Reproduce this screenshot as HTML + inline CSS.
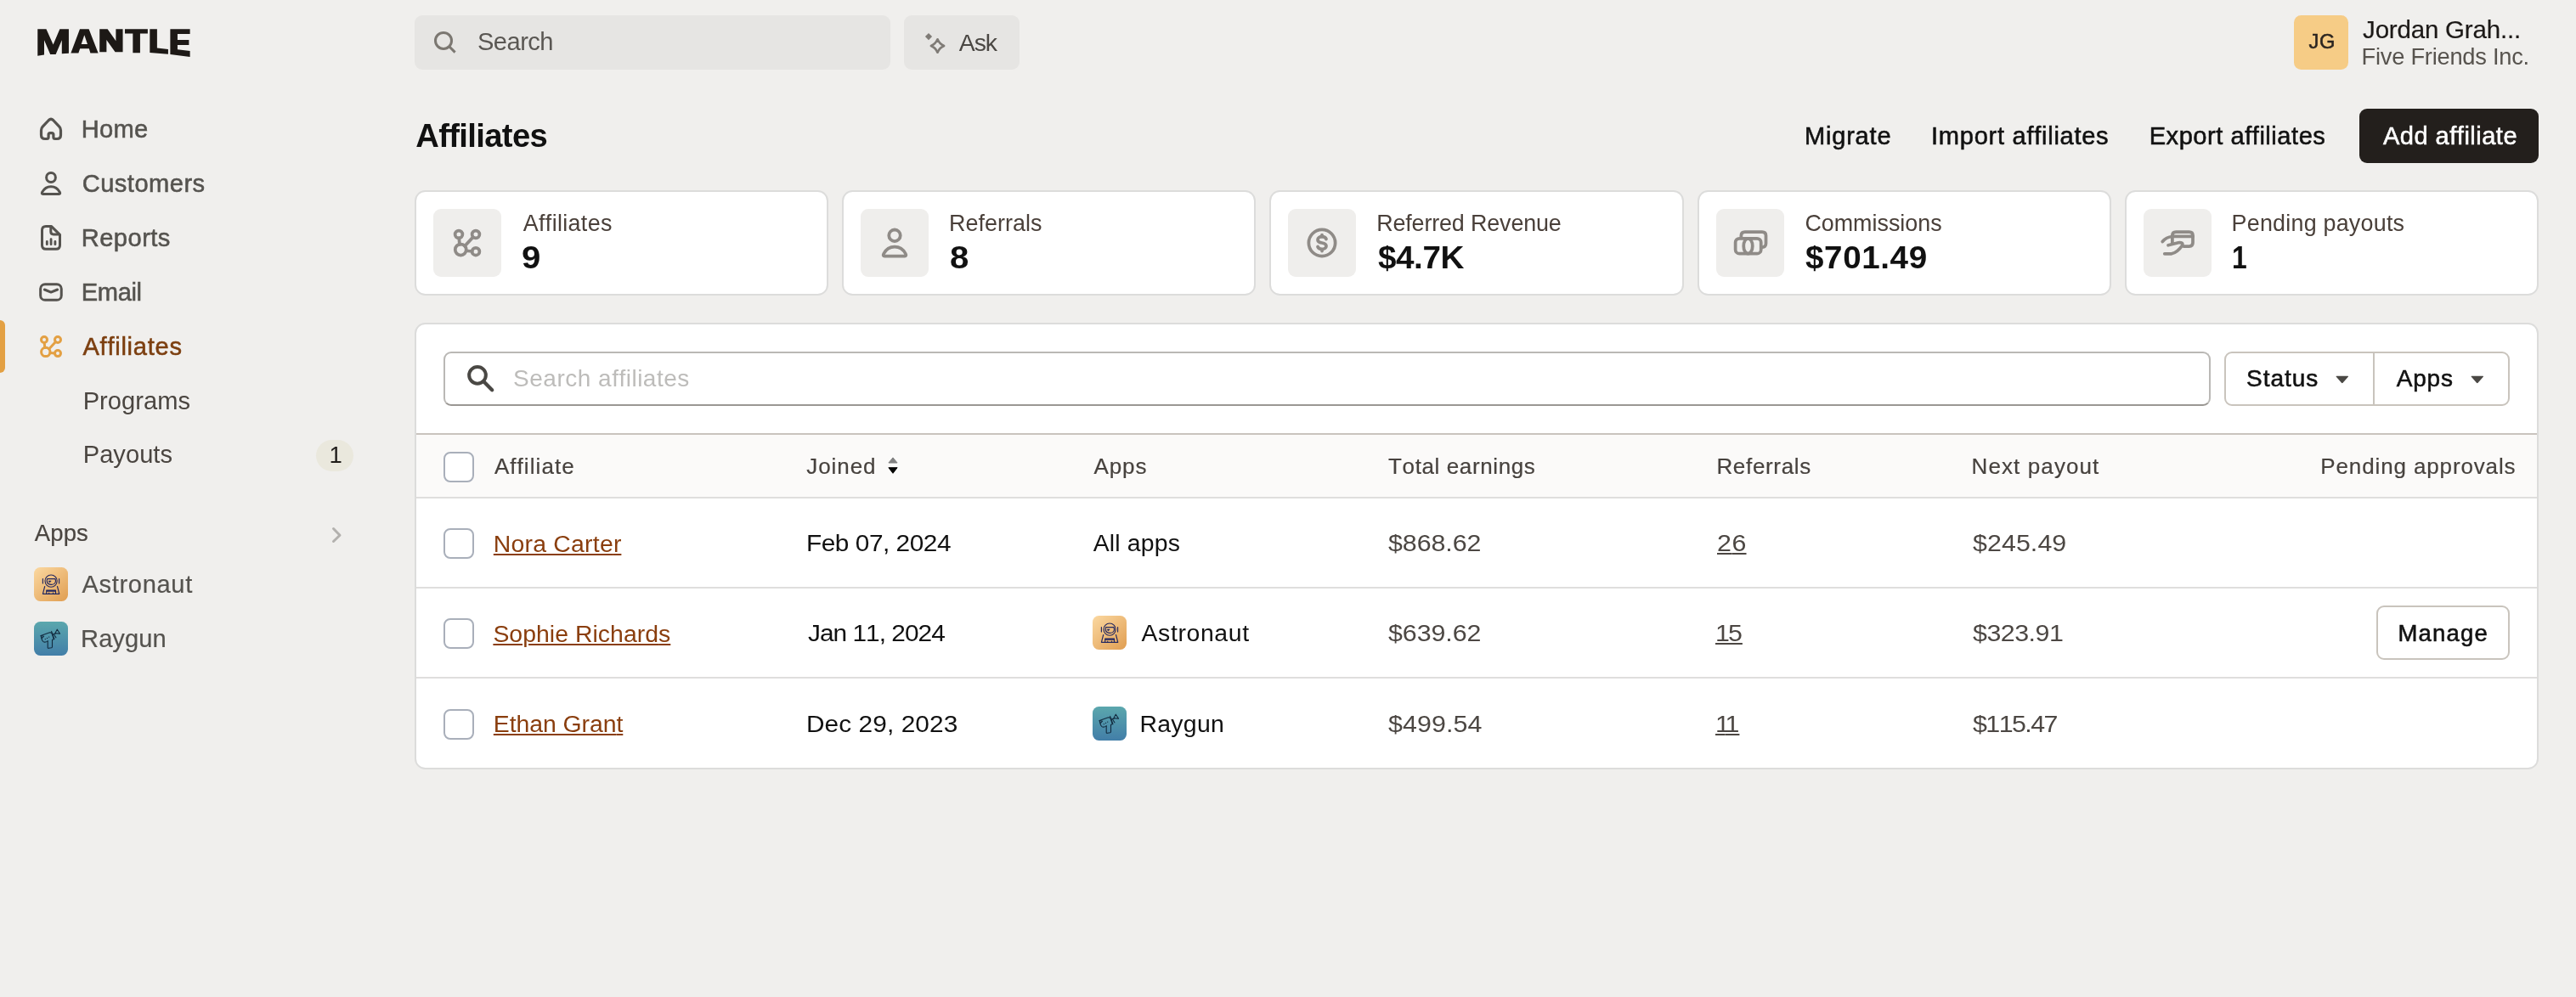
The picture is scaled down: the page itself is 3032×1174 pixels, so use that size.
<!DOCTYPE html>
<html><head><meta charset="utf-8"><title>Affiliates</title>
<style>
html,body{margin:0;padding:0}
body{width:3032px;height:1174px;background:#f0efed;position:relative;overflow:hidden;font-family:"Liberation Sans",sans-serif;}
#tx{position:absolute;left:0;top:0;width:3032px;height:1174px;will-change:transform}
.t{position:absolute;white-space:nowrap;line-height:1;font-kerning:none;font-family:"Liberation Sans",sans-serif;font-weight:400}
</style></head><body>

<svg style="position:absolute;left:30px;top:20px" width="210" height="60" viewBox="0 0 2576 736"><g fill="#1d1916"><polygon points="175,175 300,175 400,400 495,175 625,175 625,525 525,532 525,335 437,540 358,540 270,335 270,547 175,560"/><polygon points="785,175 915,175 1050,520 937,520 918,458 787,458 765,520 655,520"/><polygon points="1070,175 1185,175 1305,345 1305,175 1405,175 1405,505 1295,505 1170,330 1170,507 1070,507"/><polygon points="1435,175 1765,175 1765,240 1655,240 1655,518 1550,518 1550,240 1435,240"/><polygon points="1795,175 1900,175 1900,448 2060,465 2060,538 1795,515"/><polygon points="2090,175 2375,175 2375,245 2195,245 2195,330 2360,330 2360,405 2195,405 2195,470 2375,490 2375,575 2090,540"/><polygon points="850,262 895,393 806,393" fill="#f0efed"/></g></svg>
<svg style="position:absolute;left:40.0px;top:132.0px;color:#55534f" width="40" height="40" viewBox="0 0 20 20"><path d="M8.7 4.75 Q10 3.45 11.3 4.75 L14.9 8.6 Q15.75 9.5 15.75 10.7 V13.5 Q15.75 15.75 13.5 15.75 H12.4 Q11.45 15.75 11.45 14.8 V13.3 Q11.45 12.3 10.45 12.3 H9.55 Q8.55 12.3 8.55 13.3 V14.8 Q8.55 15.75 7.6 15.75 H6.5 Q4.25 15.75 4.25 13.5 V10.7 Q4.25 9.5 5.1 8.6 Z" fill="none" stroke="currentColor" stroke-width="1.6" stroke-linejoin="round"/></svg>
<svg style="position:absolute;left:40.0px;top:196.0px;color:#55534f" width="40" height="40" viewBox="0 0 20 20"><circle cx="10" cy="6.5" r="2.7" fill="none" stroke="currentColor" stroke-width="1.5"/><path d="M5.3 16.2 Q4.3 16.2 4.85 15.1 C6 12.9 7.8 11.85 10 11.85 C12.2 11.85 14 12.9 15.15 15.1 Q15.7 16.2 14.7 16.2 Z" fill="none" stroke="currentColor" stroke-width="1.5" stroke-linejoin="round"/></svg>
<svg style="position:absolute;left:40.0px;top:260.0px;color:#55534f" width="40" height="40" viewBox="0 0 20 20"><path d="M10.3 3.3 H7 Q4.75 3.3 4.75 5.55 V14.4 Q4.75 16.65 7 16.65 H13 Q15.25 16.65 15.25 14.4 V8.2 Z" fill="none" stroke="currentColor" stroke-width="1.5" stroke-linejoin="round"/><path d="M9.9 3.4 V6.4 Q9.9 7.95 11.45 7.95 H15.1" fill="none" stroke="currentColor" stroke-width="1.5" stroke-linejoin="round"/><path d="M7.65 12.2 V13.85 M10.03 10.85 V13.85 M12.45 12.2 V13.85" fill="none" stroke="currentColor" stroke-width="1.4" stroke-linecap="round"/></svg>
<svg style="position:absolute;left:40.0px;top:324.0px;color:#55534f" width="40" height="40" viewBox="0 0 20 20"><rect x="3.83" y="5.35" width="12.3" height="9.3" rx="2.7" fill="none" stroke="currentColor" stroke-width="1.5"/><path d="M6.2 8.5 L10 10.05 L13.8 8.5" fill="none" stroke="currentColor" stroke-width="1.5" stroke-linecap="round" stroke-linejoin="round"/></svg>
<svg style="position:absolute;left:40.0px;top:388.0px;color:#e3a043" width="40" height="40" viewBox="0 0 20 20"><g fill="none" stroke="currentColor" stroke-width="1.5" stroke-linecap="round"><circle cx="6" cy="6" r="1.75"/><circle cx="14" cy="6" r="1.75"/><circle cx="6.9" cy="13.2" r="2.6"/><circle cx="14" cy="14.05" r="1.75"/><path d="M6.1 7.75 L6.4 10.8 M8.8 11.5 L12.75 7.25 M9.5 13.7 L12.25 14"/></g></svg>
<div style="position:absolute;left:0px;top:377px;width:6px;height:62px;box-sizing:border-box;background:#e3a043;border-radius:0 6px 6px 0"></div>
<div style="position:absolute;left:372px;top:518px;width:44px;height:37px;box-sizing:border-box;background:#eae8dd;border-radius:19px"></div>
<svg style="position:absolute;left:388px;top:618px;overflow:visible" width="16" height="24" viewBox="0 0 16 24" ><path d="M4.5 4.5 L12 12.2 L4.5 19.5" fill="none" stroke="#b3b1ae" stroke-width="3" stroke-linecap="round" stroke-linejoin="round"/></svg>
<svg style="position:absolute;left:40px;top:668px" width="40" height="40" viewBox="0 0 40 40">
<defs><linearGradient id="ga40_668" x1="0.1" y1="0.05" x2="0.9" y2="0.95"><stop offset="0" stop-color="#f9d49b"/><stop offset="1" stop-color="#e2a257"/></linearGradient></defs>
<rect width="40" height="40" rx="7.5" fill="url(#ga40_668)"/>
<g fill="none" stroke="#232860" stroke-width="1.15" stroke-linecap="round" stroke-linejoin="round">
<circle cx="20.1" cy="16.1" r="7.1"/>
<path d="M15.7 13.6 H24.9 Q25.8 15.2 25.4 17 Q24.6 20.3 20.4 20.4 Q16.2 20.3 15.3 17 Q14.9 15.2 15.7 13.6Z"/>
<path d="M10.4 13.5 V18.9 M29.6 13.5 V18.9"/>
<path d="M17.3 16 H20.2 L18.5 17.9 Z" fill="#1f2456" stroke-width="0.5"/>
<path d="M12.7 22.5 L10.4 31.3 H29.8 L27.5 22.5"/>
<path d="M14.7 31.3 V27.1 H25.5 V31.3 M14.7 28.1 H25.5"/>
<path d="M17.7 30 V31 M22.5 30 V31" stroke-width="1.1"/>
</g></svg>
<svg style="position:absolute;left:40px;top:732px" width="40" height="40" viewBox="0 0 40 40">
<defs><linearGradient id="gr40_732" x1="0.5" y1="0" x2="0.5" y2="1"><stop offset="0" stop-color="#5ba7ad"/><stop offset="1" stop-color="#427ea8"/></linearGradient></defs>
<rect width="40" height="40" rx="7.5" fill="url(#gr40_732)"/>
<g fill="none" stroke="#122a3e" stroke-width="1.1" stroke-linecap="round" stroke-linejoin="round">
<path d="M16.2 22.9 Q13 25 11 23.6 Q9.2 22 8.9 19.6 L8.1 16.5 L18.6 12.7 L20.7 13.1 L23.4 20.6 L21.5 21.5"/>
<path d="M8.1 16.5 L11.6 17.2 L9.2 19.5"/>
<path d="M16.2 22.9 V30.4 Q16.2 31.5 17.3 31.3 L20.5 30.8 Q21.5 30.6 21.5 29.6 V21.5"/>
<path d="M20.6 11.4 L23.9 20.8 M23 14.2 L25.9 18.8 M22.2 15.3 L25.2 14.2"/>
<path d="M27.3 9.2 L24.9 13.6 L30.6 14.3 Z"/>
<g fill="#10273a" stroke="none"><circle cx="13.3" cy="20.6" r="0.65"/><circle cx="15.5" cy="19.4" r="0.65"/><circle cx="17.7" cy="18.1" r="0.65"/></g>
</g></svg>
<div style="position:absolute;left:488px;top:18px;width:560px;height:64px;box-sizing:border-box;background:#e6e5e3;border-radius:9px"></div>
<svg style="position:absolute;left:508px;top:34px;overflow:visible" width="32" height="32" viewBox="0 0 32 32" ><circle cx="14" cy="13.9" r="9.5" fill="none" stroke="#7b7771" stroke-width="3"/><path d="M21 21 L27.6 27.6" stroke="#7b7771" stroke-width="3" stroke-linecap="butt"/></svg>
<div style="position:absolute;left:1064px;top:18px;width:136px;height:64px;box-sizing:border-box;background:#e6e5e3;border-radius:9px"></div>
<svg style="position:absolute;left:1084px;top:34px;overflow:visible" width="32" height="32" viewBox="0 0 32 32" ><path d="M9 5 L13.1 9.1 L9 13.2 L4.9 9.1 Z" fill="#7f7b76"/><path d="M19.5 12.3 Q21.8 17.7 27.1 20 Q21.8 22.3 19.5 27.7 Q17.2 22.3 11.9 20 Q17.2 17.7 19.5 12.3 Z" fill="none" stroke="#7f7b76" stroke-width="2.7" stroke-linejoin="round"/></svg>
<div style="position:absolute;left:2700px;top:18px;width:64px;height:64px;box-sizing:border-box;background:#f6cc86;border-radius:8.5px"></div>
<div style="position:absolute;left:2777px;top:128px;width:211px;height:64px;box-sizing:border-box;background:#231f1c;border-radius:9px"></div>
<div style="position:absolute;left:488.0px;top:224px;width:487.2px;height:124px;box-sizing:border-box;background:#fff;border:2px solid #dcdcdb;border-radius:12.5px"></div>
<div style="position:absolute;left:510.0px;top:246px;width:80px;height:80px;box-sizing:border-box;background:#efeeec;border-radius:9px"></div>
<svg style="position:absolute;left:525.0px;top:261px;color:#8f8b87" width="50" height="50" viewBox="0 0 20 20"><g fill="none" stroke="currentColor" stroke-width="1.5" stroke-linecap="round"><circle cx="6" cy="6" r="1.75"/><circle cx="14" cy="6" r="1.75"/><circle cx="6.9" cy="13.2" r="2.6"/><circle cx="14" cy="14.05" r="1.75"/><path d="M6.1 7.75 L6.4 10.8 M8.8 11.5 L12.75 7.25 M9.5 13.7 L12.25 14"/></g></svg>
<div style="position:absolute;left:991.2px;top:224px;width:487.2px;height:124px;box-sizing:border-box;background:#fff;border:2px solid #dcdcdb;border-radius:12.5px"></div>
<div style="position:absolute;left:1013.2px;top:246px;width:80px;height:80px;box-sizing:border-box;background:#efeeec;border-radius:9px"></div>
<svg style="position:absolute;left:1028.2px;top:261px;color:#8f8b87" width="50" height="50" viewBox="0 0 20 20"><circle cx="10" cy="6.5" r="2.7" fill="none" stroke="currentColor" stroke-width="1.5"/><path d="M5.3 16.2 Q4.3 16.2 4.85 15.1 C6 12.9 7.8 11.85 10 11.85 C12.2 11.85 14 12.9 15.15 15.1 Q15.7 16.2 14.7 16.2 Z" fill="none" stroke="currentColor" stroke-width="1.5" stroke-linejoin="round"/></svg>
<div style="position:absolute;left:1494.4px;top:224px;width:487.2px;height:124px;box-sizing:border-box;background:#fff;border:2px solid #dcdcdb;border-radius:12.5px"></div>
<div style="position:absolute;left:1516.4px;top:246px;width:80px;height:80px;box-sizing:border-box;background:#efeeec;border-radius:9px"></div>
<svg style="position:absolute;left:1531.4px;top:261px;color:#8f8b87" width="50" height="50" viewBox="0 0 20 20"><g fill="none" stroke="currentColor" stroke-width="1.5" stroke-linecap="round"><circle cx="10" cy="10" r="6.25"/><path d="M12 8.2 C11.7 7.4 10.9 7.1 10 7.1 C8.8 7.1 8 7.7 8 8.55 C8 9.5 8.9 9.8 10 10 C11.1 10.2 12 10.5 12 11.45 C12 12.3 11.2 12.9 10 12.9 C9.1 12.9 8.3 12.6 8 11.8 M10 6.2 V7.1 M10 12.9 V13.8"/></g></svg>
<div style="position:absolute;left:1997.6px;top:224px;width:487.2px;height:124px;box-sizing:border-box;background:#fff;border:2px solid #dcdcdb;border-radius:12.5px"></div>
<div style="position:absolute;left:2019.6px;top:246px;width:80px;height:80px;box-sizing:border-box;background:#efeeec;border-radius:9px"></div>
<svg style="position:absolute;left:2034.6px;top:261px;color:#8f8b87" width="50" height="50" viewBox="0 0 20 20"><g fill="none" stroke="currentColor" stroke-width="1.5" stroke-linejoin="round" stroke-linecap="round"><path d="M5.75 7.2 V6.6 Q5.75 4.8 7.55 4.8 H15.6 Q17.4 4.8 17.4 6.6 V10.2 Q17.4 12 15.7 12"/><rect x="3.05" y="7.9" width="12.05" height="7.15" rx="1.9"/><ellipse cx="9" cy="11.47" rx="2.1" ry="3.55"/></g></svg>
<div style="position:absolute;left:2500.8px;top:224px;width:487.2px;height:124px;box-sizing:border-box;background:#fff;border:2px solid #dcdcdb;border-radius:12.5px"></div>
<div style="position:absolute;left:2522.8px;top:246px;width:80px;height:80px;box-sizing:border-box;background:#efeeec;border-radius:9px"></div>
<svg style="position:absolute;left:2537.8px;top:261px;color:#8f8b87" width="50" height="50" viewBox="0 0 20 20"><g fill="none" stroke="currentColor" stroke-width="1.5" stroke-linecap="round" stroke-linejoin="round"><path d="M7.55 10.3 V6.5 Q7.55 4.8 9.25 4.8 H15.5 Q17.2 4.8 17.2 6.5 V9.9 Q17.2 11.6 15.5 11.6 H12.9"/><path d="M7.55 6.95 H17.2"/><path d="M2.9 9.4 Q4.7 7.2 7.5 7"/><path d="M5.6 11.1 L10.4 9.9 Q12.6 9.6 12.3 11.1 Q10 14.5 7.2 15.1 H3.9"/></g></svg>
<div style="position:absolute;left:488px;top:380px;width:2500px;height:526px;box-sizing:border-box;background:#fff;border:2px solid #dcdcdb;border-radius:12.5px"></div>
<div style="position:absolute;left:522px;top:414px;width:2080px;height:64px;box-sizing:border-box;background:#fff;border:2px solid #bab8b5;border-bottom-color:#9a9793;border-radius:9px"></div>
<svg style="position:absolute;left:546px;top:426px;overflow:visible" width="40" height="40" viewBox="0 0 40 40" ><circle cx="16" cy="15.8" r="9.85" fill="none" stroke="#4a4844" stroke-width="4"/><path d="M23.3 23.3 L33.2 33.2" stroke="#4a4844" stroke-width="4.3" stroke-linecap="round"/></svg>
<div style="position:absolute;left:2618px;top:414px;width:336px;height:64px;box-sizing:border-box;background:#fff;border:2px solid #c9c4bd;border-radius:9px"></div>
<div style="position:absolute;left:2793px;top:416px;width:2px;height:60px;box-sizing:border-box;background:#c9c4bd"></div>
<svg style="position:absolute;left:2749.2px;top:442px;overflow:visible" width="15.6" height="9.8" viewBox="0 0 15 9.4" preserveAspectRatio="none"><path d="M1.2 0.6 H13.8 Q15 0.6 14.2 1.6 L8.3 8.4 Q7.5 9.2 6.7 8.4 L0.8 1.6 Q0 0.6 1.2 0.6 Z" fill="#4a4844"/></svg>
<svg style="position:absolute;left:2908.3px;top:442px;overflow:visible" width="15.6" height="9.8" viewBox="0 0 15 9.4" preserveAspectRatio="none"><path d="M1.2 0.6 H13.8 Q15 0.6 14.2 1.6 L8.3 8.4 Q7.5 9.2 6.7 8.4 L0.8 1.6 Q0 0.6 1.2 0.6 Z" fill="#4a4844"/></svg>
<div style="position:absolute;left:490px;top:510px;width:2496px;height:2px;box-sizing:border-box;background:#c9c3be"></div>
<div style="position:absolute;left:490px;top:512px;width:2496px;height:73px;box-sizing:border-box;background:#fbfaf9"></div>
<div style="position:absolute;left:490px;top:585px;width:2496px;height:2px;box-sizing:border-box;background:#dfdedd"></div>
<div style="position:absolute;left:490px;top:691px;width:2496px;height:2px;box-sizing:border-box;background:#dfdedd"></div>
<div style="position:absolute;left:490px;top:797px;width:2496px;height:2px;box-sizing:border-box;background:#dfdedd"></div>
<svg style="position:absolute;left:1045px;top:538px;overflow:visible" width="12" height="20" viewBox="0 0 12 20" ><path d="M6 0.9 L11.1 7 H0.9 Z" fill="#828282" stroke="#828282" stroke-width="1" stroke-linejoin="round"/><path d="M6 19.3 L11.1 12.7 H0.9 Z" fill="#050505" stroke="#050505" stroke-width="1" stroke-linejoin="round"/></svg>
<div style="position:absolute;left:522px;top:532px;width:36px;height:36px;box-sizing:border-box;background:#fff;border:2px solid #a9afba;border-radius:8px"></div>
<div style="position:absolute;left:522px;top:622px;width:36px;height:36px;box-sizing:border-box;background:#fff;border:2px solid #a9afba;border-radius:8px"></div>
<div style="position:absolute;left:522px;top:728px;width:36px;height:36px;box-sizing:border-box;background:#fff;border:2px solid #a9afba;border-radius:8px"></div>
<div style="position:absolute;left:522px;top:835px;width:36px;height:36px;box-sizing:border-box;background:#fff;border:2px solid #a9afba;border-radius:8px"></div>
<svg style="position:absolute;left:1286px;top:725px" width="40" height="40" viewBox="0 0 40 40">
<defs><linearGradient id="ga1286_725" x1="0.1" y1="0.05" x2="0.9" y2="0.95"><stop offset="0" stop-color="#f9d49b"/><stop offset="1" stop-color="#e2a257"/></linearGradient></defs>
<rect width="40" height="40" rx="7.5" fill="url(#ga1286_725)"/>
<g fill="none" stroke="#232860" stroke-width="1.15" stroke-linecap="round" stroke-linejoin="round">
<circle cx="20.1" cy="16.1" r="7.1"/>
<path d="M15.7 13.6 H24.9 Q25.8 15.2 25.4 17 Q24.6 20.3 20.4 20.4 Q16.2 20.3 15.3 17 Q14.9 15.2 15.7 13.6Z"/>
<path d="M10.4 13.5 V18.9 M29.6 13.5 V18.9"/>
<path d="M17.3 16 H20.2 L18.5 17.9 Z" fill="#1f2456" stroke-width="0.5"/>
<path d="M12.7 22.5 L10.4 31.3 H29.8 L27.5 22.5"/>
<path d="M14.7 31.3 V27.1 H25.5 V31.3 M14.7 28.1 H25.5"/>
<path d="M17.7 30 V31 M22.5 30 V31" stroke-width="1.1"/>
</g></svg>
<svg style="position:absolute;left:1286px;top:832px" width="40" height="40" viewBox="0 0 40 40">
<defs><linearGradient id="gr1286_832" x1="0.5" y1="0" x2="0.5" y2="1"><stop offset="0" stop-color="#5ba7ad"/><stop offset="1" stop-color="#427ea8"/></linearGradient></defs>
<rect width="40" height="40" rx="7.5" fill="url(#gr1286_832)"/>
<g fill="none" stroke="#122a3e" stroke-width="1.1" stroke-linecap="round" stroke-linejoin="round">
<path d="M16.2 22.9 Q13 25 11 23.6 Q9.2 22 8.9 19.6 L8.1 16.5 L18.6 12.7 L20.7 13.1 L23.4 20.6 L21.5 21.5"/>
<path d="M8.1 16.5 L11.6 17.2 L9.2 19.5"/>
<path d="M16.2 22.9 V30.4 Q16.2 31.5 17.3 31.3 L20.5 30.8 Q21.5 30.6 21.5 29.6 V21.5"/>
<path d="M20.6 11.4 L23.9 20.8 M23 14.2 L25.9 18.8 M22.2 15.3 L25.2 14.2"/>
<path d="M27.3 9.2 L24.9 13.6 L30.6 14.3 Z"/>
<g fill="#10273a" stroke="none"><circle cx="13.3" cy="20.6" r="0.65"/><circle cx="15.5" cy="19.4" r="0.65"/><circle cx="17.7" cy="18.1" r="0.65"/></g>
</g></svg>
<div style="position:absolute;left:2797px;top:713px;width:157px;height:64px;box-sizing:border-box;background:#fff;border:2px solid #c9c4bd;border-radius:9px"></div>
<div id="tx">
<span class="t" id="home" style="left:95.68px;top:137.75px;font-size:29.1px;color:#55534f;letter-spacing:0.308px;-webkit-text-stroke:0.55px #55534f;">Home</span>
<span class="t" id="cust" style="left:96.68px;top:201.55px;font-size:29.1px;color:#55534f;letter-spacing:0.480px;-webkit-text-stroke:0.55px #55534f;">Customers</span>
<span class="t" id="rep" style="left:95.78px;top:265.65px;font-size:29.1px;color:#55534f;letter-spacing:0.454px;-webkit-text-stroke:0.55px #55534f;">Reports</span>
<span class="t" id="email" style="left:95.78px;top:329.65px;font-size:29.1px;color:#55534f;letter-spacing:-0.384px;-webkit-text-stroke:0.55px #55534f;">Email</span>
<span class="t" id="aff" style="left:97.48px;top:393.95px;font-size:29.1px;color:#7c3f10;letter-spacing:0.727px;-webkit-text-stroke:0.55px #7c3f10;">Affiliates</span>
<span class="t" id="prog" style="left:97.70px;top:457.65px;font-size:29.1px;color:#4a4540;letter-spacing:0.020px;">Programs</span>
<span class="t" id="pay" style="left:97.70px;top:521.35px;font-size:29.1px;color:#4a4540;letter-spacing:0.037px;">Payouts</span>
<span class="t" id="badge" style="left:387.50px;top:521.91px;font-size:27.5px;color:#1f1c19;letter-spacing:0.000px;">1</span>
<span class="t" id="appsl" style="left:40.70px;top:613.71px;font-size:27.5px;color:#4a4540;letter-spacing:0.156px;-webkit-text-stroke:0.2px #4a4540;">Apps</span>
<span class="t" id="astro" style="left:96.40px;top:673.75px;font-size:29.1px;color:#55534f;letter-spacing:0.669px;-webkit-text-stroke:0.2px #55534f;">Astronaut</span>
<span class="t" id="ray" style="left:95.10px;top:737.55px;font-size:29.1px;color:#55534f;letter-spacing:0.040px;-webkit-text-stroke:0.2px #55534f;">Raygun</span>
<span class="t" id="search" style="left:562.00px;top:35.35px;font-size:29.1px;color:#5a5753;letter-spacing:-0.540px;">Search</span>
<span class="t" id="ask" style="left:1128.80px;top:35.65px;font-size:28.4px;color:#4a4743;letter-spacing:-1.066px;">Ask</span>
<span class="t" id="h1" style="left:489.20px;top:140.54px;font-size:38.2px;color:#111111;letter-spacing:-0.637px;font-weight:700;">Affiliates</span>
<span class="t" id="jg" style="left:2717.47px;top:38.33px;font-size:23.7px;color:#2b2520;letter-spacing:0.606px;-webkit-text-stroke:0.55px #2b2520;">JG</span>
<span class="t" id="name" style="left:2781.10px;top:19.91px;font-size:29.5px;color:#1c1917;letter-spacing:-0.198px;-webkit-text-stroke:0.2px #1c1917;">Jordan Grah...</span>
<span class="t" id="org" style="left:2779.60px;top:52.88px;font-size:27.3px;color:#57534e;letter-spacing:-0.261px;">Five Friends Inc.</span>
<span class="t" id="mig" style="left:2123.97px;top:145.75px;font-size:29.1px;color:#111111;letter-spacing:0.770px;-webkit-text-stroke:0.55px #111111;">Migrate</span>
<span class="t" id="imp" style="left:2273.08px;top:145.75px;font-size:29.1px;color:#111111;letter-spacing:0.708px;-webkit-text-stroke:0.55px #111111;">Import affiliates</span>
<span class="t" id="exp" style="left:2529.68px;top:145.75px;font-size:29.1px;color:#111111;letter-spacing:0.519px;-webkit-text-stroke:0.55px #111111;">Export affiliates</span>
<span class="t" id="add" style="left:2804.88px;top:145.75px;font-size:29.1px;color:#ffffff;letter-spacing:0.475px;-webkit-text-stroke:0.55px #ffffff;">Add affiliate</span>
<span class="t" id="cl0" style="left:615.80px;top:250.32px;font-size:26.9px;color:#4a403a;letter-spacing:0.330px;">Affiliates</span>
<span class="t" id="cv0" style="left:614.33px;top:284.64px;font-size:37.5px;color:#111111;letter-spacing:0.000px;font-weight:700;transform:scaleX(1.07);transform-origin:0 50%;">9</span>
<span class="t" id="cl1" style="left:1117.00px;top:250.32px;font-size:26.9px;color:#4a403a;letter-spacing:0.035px;">Referrals</span>
<span class="t" id="cv1" style="left:1117.53px;top:284.64px;font-size:37.5px;color:#111111;letter-spacing:0.000px;font-weight:700;transform:scaleX(1.07);transform-origin:0 50%;">8</span>
<span class="t" id="cl2" style="left:1620.20px;top:250.32px;font-size:26.9px;color:#4a403a;letter-spacing:-0.143px;">Referred Revenue</span>
<span class="t" id="cv2" style="left:1621.80px;top:284.64px;font-size:37.5px;color:#111111;letter-spacing:-0.409px;font-weight:700;transform:scaleX(1.03);transform-origin:0 50%;">$4.7K</span>
<span class="t" id="cl3" style="left:2124.40px;top:250.32px;font-size:26.9px;color:#4a403a;letter-spacing:-0.014px;">Commissions</span>
<span class="t" id="cv3" style="left:2125.00px;top:284.64px;font-size:37.5px;color:#111111;letter-spacing:0.576px;font-weight:700;transform:scaleX(1.03);transform-origin:0 50%;">$701.49</span>
<span class="t" id="cl4" style="left:2626.60px;top:250.32px;font-size:26.9px;color:#4a403a;letter-spacing:0.220px;">Pending payouts</span>
<span class="t" id="cv4" style="left:2627.10px;top:284.64px;font-size:37.5px;color:#111111;letter-spacing:0.000px;font-weight:700;transform:scaleX(0.85);transform-origin:0 50%;">1</span>
<span class="t" id="sa" style="left:604.10px;top:432.38px;font-size:28px;color:#bdbcba;letter-spacing:0.499px;">Search affiliates</span>
<span class="t" id="status" style="left:2643.97px;top:431.68px;font-size:28px;color:#111111;letter-spacing:0.994px;-webkit-text-stroke:0.55px #111111;">Status</span>
<span class="t" id="appsb" style="left:2820.78px;top:431.68px;font-size:28px;color:#111111;letter-spacing:0.777px;-webkit-text-stroke:0.55px #111111;">Apps</span>
<span class="t" id="h_aff" style="left:581.90px;top:536.38px;font-size:26.0px;color:#47423e;letter-spacing:1.062px;-webkit-text-stroke:0.2px #47423e;">Affiliate</span>
<span class="t" id="h_join" style="left:949.20px;top:536.38px;font-size:26.0px;color:#47423e;letter-spacing:0.949px;-webkit-text-stroke:0.2px #47423e;">Joined</span>
<span class="t" id="h_apps" style="left:1287.50px;top:536.38px;font-size:26.0px;color:#47423e;letter-spacing:0.879px;-webkit-text-stroke:0.2px #47423e;">Apps</span>
<span class="t" id="h_tot" style="left:1634.10px;top:536.38px;font-size:26.0px;color:#47423e;letter-spacing:0.611px;-webkit-text-stroke:0.2px #47423e;">Total earnings</span>
<span class="t" id="h_ref" style="left:2020.40px;top:536.38px;font-size:26.0px;color:#47423e;letter-spacing:0.678px;-webkit-text-stroke:0.2px #47423e;">Referrals</span>
<span class="t" id="h_next" style="left:2320.60px;top:536.38px;font-size:26.0px;color:#47423e;letter-spacing:1.098px;-webkit-text-stroke:0.2px #47423e;">Next payout</span>
<span class="t" id="h_pend" style="left:2731.30px;top:536.38px;font-size:26.0px;color:#47423e;letter-spacing:0.870px;-webkit-text-stroke:0.2px #47423e;">Pending approvals</span>
<span class="t" id="r0n" style="left:580.80px;top:625.85px;font-size:28.4px;color:#8a3e0e;letter-spacing:0.225px;text-decoration:underline;text-decoration-thickness:2px;text-underline-offset:2.4px;">Nora Carte<span style="letter-spacing:0">r</span></span>
<span class="t" id="r0d" style="left:949.20px;top:625.45px;font-size:28.4px;color:#111111;letter-spacing:-0.447px;transform:scaleX(1.05);transform-origin:0 50%;">Feb 07, 2024</span>
<span class="t" id="r0a" style="left:1286.70px;top:625.45px;font-size:28.4px;color:#111111;letter-spacing:0.185px;">All apps</span>
<span class="t" id="r0t" style="left:1634.00px;top:625.45px;font-size:28.4px;color:#4c4743;letter-spacing:-0.072px;transform:scaleX(1.07);transform-origin:0 50%;">$868.62</span>
<span class="t" id="r0r" style="left:2020.93px;top:625.45px;font-size:28.4px;color:#4c4743;letter-spacing:0.678px;text-decoration:underline;text-decoration-thickness:2px;text-underline-offset:2.4px;transform:scaleX(1.07);transform-origin:0 50%;">2<span style="letter-spacing:0">6</span></span>
<span class="t" id="r0p" style="left:2322.40px;top:625.45px;font-size:28.4px;color:#4c4743;letter-spacing:0.068px;transform:scaleX(1.07);transform-origin:0 50%;">$245.49</span>
<span class="t" id="r1n" style="left:580.40px;top:731.85px;font-size:28.4px;color:#8a3e0e;letter-spacing:0.042px;text-decoration:underline;text-decoration-thickness:2px;text-underline-offset:2.4px;">Sophie Richard<span style="letter-spacing:0">s</span></span>
<span class="t" id="r1d" style="left:951.30px;top:731.45px;font-size:28.4px;color:#111111;letter-spacing:-0.922px;transform:scaleX(1.05);transform-origin:0 50%;">Jan 11, 2024</span>
<span class="t" id="r1a" style="left:1343.50px;top:731.45px;font-size:28.4px;color:#111111;letter-spacing:0.634px;">Astronaut</span>
<span class="t" id="r1t" style="left:1634.00px;top:731.45px;font-size:28.4px;color:#4c4743;letter-spacing:-0.072px;transform:scaleX(1.07);transform-origin:0 50%;">$639.62</span>
<span class="t" id="r1r" style="left:2019.16px;top:731.45px;font-size:28.4px;color:#4c4743;letter-spacing:-1.780px;text-decoration:underline;text-decoration-thickness:2px;text-underline-offset:2.4px;transform:scaleX(1.07);transform-origin:0 50%;">1<span style="letter-spacing:0">5</span></span>
<span class="t" id="r1p" style="left:2322.40px;top:731.45px;font-size:28.4px;color:#4c4743;letter-spacing:-0.462px;transform:scaleX(1.07);transform-origin:0 50%;">$323.91</span>
<span class="t" id="r2n" style="left:580.80px;top:837.95px;font-size:28.4px;color:#8a3e0e;letter-spacing:-0.060px;text-decoration:underline;text-decoration-thickness:2px;text-underline-offset:2.4px;">Ethan Gran<span style="letter-spacing:0">t</span></span>
<span class="t" id="r2d" style="left:949.20px;top:837.55px;font-size:28.4px;color:#111111;letter-spacing:0.078px;transform:scaleX(1.05);transform-origin:0 50%;">Dec 29, 2023</span>
<span class="t" id="r2a" style="left:1341.50px;top:837.55px;font-size:28.4px;color:#111111;letter-spacing:0.287px;">Raygun</span>
<span class="t" id="r2t" style="left:1634.00px;top:837.55px;font-size:28.4px;color:#4c4743;letter-spacing:0.084px;transform:scaleX(1.07);transform-origin:0 50%;">$499.54</span>
<span class="t" id="r2r" style="left:2019.16px;top:837.55px;font-size:28.4px;color:#4c4743;letter-spacing:-5.051px;text-decoration:underline;text-decoration-thickness:2px;text-underline-offset:2.4px;transform:scaleX(1.07);transform-origin:0 50%;">1<span style="letter-spacing:0">1</span></span>
<span class="t" id="r2p" style="left:2322.40px;top:837.55px;font-size:28.4px;color:#4c4743;letter-spacing:-1.459px;transform:scaleX(1.07);transform-origin:0 50%;">$115.47</span>
<span class="t" id="manage" style="left:2822.47px;top:731.91px;font-size:27.5px;color:#111111;letter-spacing:1.173px;-webkit-text-stroke:0.55px #111111;">Manage</span>
</div>
<script>(function(){var w=window.innerWidth||3032;if(w>0&&w<3000){document.body.style.zoom=(w/3032);}})();</script>
</body></html>
